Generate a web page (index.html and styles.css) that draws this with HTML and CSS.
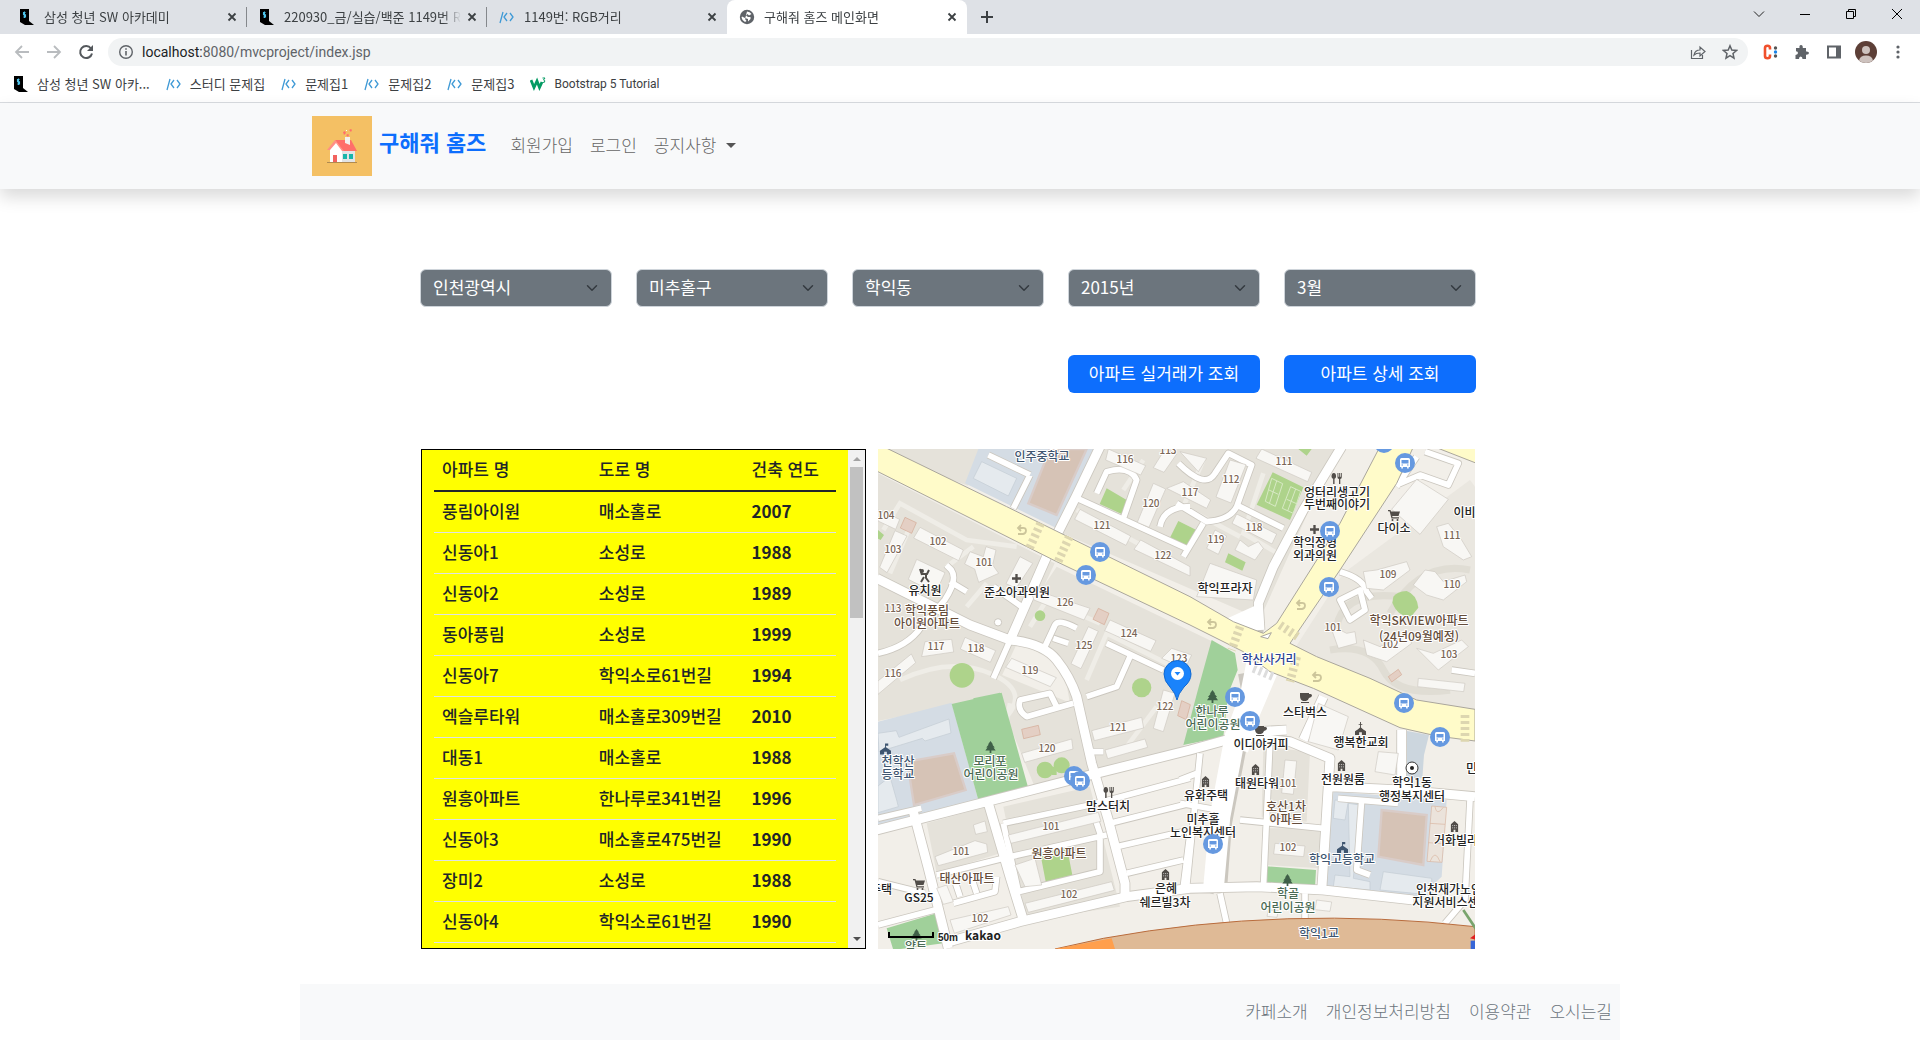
FILE: index.html
```html
<!DOCTYPE html>
<html lang="ko">
<head>
<meta charset="utf-8">
<title>구해줘 홈즈 메인화면</title>
<link rel="stylesheet" href="styles.css">
</head>
<body>
<svg class="defs" aria-hidden="true">
  <symbol id="ssafy" viewBox="0 0 16 16"><path d="M1 0h9v12l5 4H6l-5-3z" fill="#000"/><path d="M6.500 3.500h-2v2.200h2v2.300h-2.200M5.500 2.500v6.500" fill="none" stroke="#4fc3ea" stroke-width="1.100"/></symbol>
  <symbol id="code" viewBox="0 0 16 16"><path d="M4 3L1 14M8 4L5 8l3 4M11 4l3 4-3 4" fill="none" stroke="#3f9ad6" stroke-width="1.300"/></symbol>
  <symbol id="close" viewBox="0 0 16 16"><path d="M4.500 4.500l7 7M11.500 4.500l-7 7" stroke="#3c4043" stroke-width="1.800"/></symbol>
  <symbol id="bus" viewBox="0 0 20 20"><circle cx="10" cy="10" r="10" fill="#6699e0"/><path d="M6.500 5h7q1.500 0 1.500 1.500V14h-1.300v1.500h-1.600V14H7.900v1.500H6.300V14H5V6.500Q5 5 6.500 5z" fill="#fff"/><path d="M6.500 7h7v3.500h-7z" fill="#6699e0"/><path d="M6.500 12h1.500M12 12h1.500" stroke="#6699e0"/></symbol>
  <symbol id="tree" viewBox="0 0 12 14"><path d="M6 0l3 4H8l3 3.500H9.500L12 11H7v3H5v-3H0l2.500-3.500H1L4 4H3z" fill="#3f6048"/></symbol>
  <symbol id="tower" viewBox="0 0 10 12"><path d="M5 0l4 3.500V12H6V9.500H4V12H1V3.500z" fill="#514d49"/><path d="M2.500 5h5M2.500 7.500h5" stroke="#fff" stroke-width=".8" stroke-dasharray="1 1"/></symbol>
  <symbol id="school" viewBox="0 0 12 12"><path d="M6 0h3v2.500H6.500V4L12 8v4H7.500V9h-3v3H0V8l5.500-4V0z" fill="#3e5570"/></symbol>
  <symbol id="church" viewBox="0 0 12 14"><path d="M5.500 0h1v2H8v1H6.500v3L9 8l3 2v4H7.500v-3h-3v3H0v-4l3-2 2.500-2V3H4V2h1.500z" fill="#514d49"/></symbol>
  <symbol id="fork" viewBox="0 0 12 12"><path d="M2.500 0C4.500 0 5 2 5 3.500S4 6 3.300 6.300V12H1.800V6.300C1 6 0 5 0 3.500S.8 0 2.500 0zM6.500 0h1v4h.9V0h1v4h.8V0h1v4.500q0 1.500-1.600 2V12H8.200V6.500q-1.700-.5-1.700-2z" fill="#514d49"/></symbol>
  <symbol id="cart" viewBox="0 0 12 11"><path d="M0 0h2.500l.5 1.500h9L10.500 6H4.200l.3 1.200H11v1.200H3.500L1.600 1.200H0z" fill="#514d49"/><circle cx="4.500" cy="10" r="1" fill="#514d49"/><circle cx="9.500" cy="10" r="1" fill="#514d49"/></symbol>
  <symbol id="cup" viewBox="0 0 12 10"><path d="M0 0h9v1h1.500Q12 1 12 2.500T9 5Q8 8 6 8H3Q0 7 0 3zM1 9h8v1H1z" fill="#514d49"/></symbol>
  <symbol id="cross" viewBox="0 0 10 10"><path d="M3.700 0h2.600v3.700H10v2.600H6.300V10H3.700V6.300H0V3.700h3.700z" fill="#514d49"/></symbol>
  <symbol id="uturn" viewBox="0 0 12 12"><path d="M2 10h5q3-.5 3-3.500T6 4H2M5 1L2 4l3 3" fill="none" stroke="#ccc59a" stroke-width="1.800"/></symbol>
</svg>

<div class="browser">
  <div class="tabs">
    <div class="tab"><svg class="ico"><use href="#ssafy"/></svg><span class="tab-title">삼성 청년 SW 아카데미</span><button class="tab-close" aria-label="탭 닫기"><svg class="ico"><use href="#close"/></svg></button></div>
    <div class="tab"><svg class="ico"><use href="#ssafy"/></svg><span class="tab-title">220930_금/실습/백준 1149번 RGB거리</span><button class="tab-close" aria-label="탭 닫기"><svg class="ico"><use href="#close"/></svg></button></div>
    <div class="tab tab-plain"><svg class="ico"><use href="#code"/></svg><span class="tab-title">1149번: RGB거리</span><button class="tab-close" aria-label="탭 닫기"><svg class="ico"><use href="#close"/></svg></button></div>
    <div class="tab tab-active"><svg class="ico" viewBox="0 0 16 16"><circle cx="8" cy="8" r="7.200" fill="#5f6368"/><path d="M8 2.500q3 0 4.500 2.500L10 6.500 8.500 5 7 6.500 9 8h2.500v2L9 12.500V10L6 9 3 7.500l-.5 1q.5 3 3.500 4.500l1.500-1L6 10z" fill="#fff"/></svg><span class="tab-title">구해줘 홈즈 메인화면</span><button class="tab-close" aria-label="탭 닫기"><svg class="ico"><use href="#close"/></svg></button></div>
    <button class="new-tab" aria-label="새 탭"><svg class="ico" viewBox="0 0 16 16"><path d="M8 2v12M2 8h12" stroke="#3c4043" stroke-width="2"/></svg></button>
    <div class="win-buttons">
      <button aria-label="탭 검색"><svg class="ico" viewBox="0 0 16 16"><path d="M3 5.500l5 5 5-5" fill="none" stroke="#222"/></svg></button>
      <button aria-label="최소화"><svg class="ico" viewBox="0 0 16 16"><path d="M3 8.500h10" stroke="#000"/></svg></button>
      <button aria-label="이전 크기로"><svg class="ico" viewBox="0 0 16 16"><path d="M3.500 5.500h7v7h-7zM5.500 5.500v-2h7v7h-2" fill="none" stroke="#000"/></svg></button>
      <button aria-label="닫기"><svg class="ico" viewBox="0 0 16 16"><path d="M3 3l10 10M13 3L3 13" stroke="#000"/></svg></button>
    </div>
  </div>
  <div class="toolbar">
    <button aria-label="뒤로"><svg class="ico" viewBox="0 0 16 16"><path d="M15 8H2M8 2L2 8l6 6" fill="none" stroke="#b9bcbf" stroke-width="1.800"/></svg></button>
    <button aria-label="앞으로"><svg class="ico" viewBox="0 0 16 16"><path d="M1 8h13M8 2l6 6-6 6" fill="none" stroke="#b9bcbf" stroke-width="1.800"/></svg></button>
    <button aria-label="새로고침"><svg class="ico" viewBox="0 0 16 16"><path d="M13 4.500A6 6 0 1 0 14 9.500" fill="none" stroke="#54585c" stroke-width="2"/><path d="M15 1v6H9z" fill="#54585c"/></svg></button>
    <div class="omnibox">
      <svg class="ico" viewBox="0 0 16 16"><circle cx="8" cy="8" r="6.300" fill="none" stroke="#5f6368" stroke-width="1.400"/><path d="M8 7v4.500M8 4.300v1.500" stroke="#5f6368" stroke-width="1.600"/></svg>
      <p class="url"><span class="host">localhost:</span>8080/mvcproject/index.jsp</p>
      <button aria-label="공유"><svg class="ico" viewBox="0 0 16 16"><path d="M1.500 6v8.500h11V11M4 11q1-5 6-5V3l5 4.500L10 12V9q-4 0-6 2z" fill="none" stroke="#5f6368" stroke-width="1.200"/></svg></button>
      <button aria-label="북마크"><svg class="ico" viewBox="0 0 16 16"><path d="M8 1.800l1.800 4.300 4.700.4-3.500 3 1 4.600L8 11.700l-4 2.400 1-4.600-3.500-3 4.700-.4z" fill="none" stroke="#5f6368" stroke-width="1.500"/></svg></button>
    </div>
    <div class="extensions">
      <button aria-label="확장 프로그램 C"><svg class="ico" viewBox="0 0 16 16"><path d="M8 5.500V4Q8 1.800 5.500 1.800T3 4v8q0 2.200 2.500 2.200T8 12v-1.500" fill="none" stroke="#f0502c" stroke-width="2.600"/><circle cx="13.500" cy="4" r="1.700" fill="#555"/><circle cx="13.500" cy="8" r="1.700" fill="#1a84e8"/><circle cx="13.500" cy="12" r="1.700" fill="#555"/></svg></button>
      <button aria-label="확장 프로그램"><svg class="ico" viewBox="0 0 16 16"><path d="M2 4h3.500q-.5-3 1.500-3t1.800 3H12v3.500q3-.3 3 1.500t-3 1.700V15H8.500q0-2.500-1.800-2.500T5 15H1.500v-4Q4 10.500 4 9T2 7.300z" fill="#5f6368"/></svg></button>
      <button aria-label="측면 패널"><svg class="ico" viewBox="0 0 16 16"><path d="M2 2.500h12v11H2z" fill="#fff" stroke="#5f6368" stroke-width="2"/><path d="M10 2h4v12h-4z" fill="#5f6368"/></svg></button>
      <button class="profile" aria-label="프로필"><svg class="avatar" viewBox="0 0 22 22"><circle cx="11" cy="11" r="11" fill="#5d3f37"/><circle cx="11" cy="9" r="4" fill="#cdc2be"/><path d="M4 19.500q1-5 7-5t7 5q-3 2.500-7 2.500t-7-2.500z" fill="#cdc2be"/></svg></button>
      <button aria-label="메뉴"><svg class="ico" viewBox="0 0 16 16"><circle cx="8" cy="3" r="1.600" fill="#5f6368"/><circle cx="8" cy="8" r="1.600" fill="#5f6368"/><circle cx="8" cy="13" r="1.600" fill="#5f6368"/></svg></button>
    </div>
  </div>
  <nav class="bookmarks" aria-label="북마크바">
    <a href="#"><svg class="ico"><use href="#ssafy"/></svg>삼성 청년 SW 아카...</a>
    <a href="#"><svg class="ico"><use href="#code"/></svg>스터디 문제집</a>
    <a href="#"><svg class="ico"><use href="#code"/></svg>문제집1</a>
    <a href="#"><svg class="ico"><use href="#code"/></svg>문제집2</a>
    <a href="#"><svg class="ico"><use href="#code"/></svg>문제집3</a>
    <a href="#" class="latin"><svg class="ico" viewBox="0 0 16 16"><path d="M1 4l3 7.500L7 5l2.500 6.500L12 6" fill="none" stroke="#049b63" stroke-width="2.800"/><path d="M12.500 2h2.500l-1.500 2q2 .3 1 2.200l-2 .3" fill="none" stroke="#049b63"/></svg>Bootstrap 5 Tutorial</a>
  </nav>
</div>

<header class="site-header">
  <div class="header-inner">
    <a href="#" class="brand">
      <svg class="logo" viewBox="0 0 60 60" aria-hidden="true"><path d="M0 0h60v60H0z" fill="#f4c064"/><path d="M15 46h30v1H15z" fill="#b08a50"/><path d="M18 33l6-8 7 8v13H18z" fill="#fff"/><path d="M30 33h13v13H30z" fill="#e2e4e6"/><path d="M23 24h16l6 11H31z" fill="#ff6f6a"/><path d="M23 24l-8 10h3l6-7 6 8h2z" fill="#ff8f85"/><path d="M33 21h5v8l-5-2z" fill="#f4f1ee"/><path d="M21 39h4v7h-4z" fill="#f2635f"/><path d="M31 38h4v5h-4zM37 38h4v5h-4z" fill="#19b5aa"/><path d="M31 16l2-1 1 2-2 2zM34 19l2-1 1 1-1 2zM37 14l2-1 1 1-1 2z" fill="#ff6f6a"/><path d="M34 14h1v1h-1z" fill="#fff"/></svg>
      <span class="brand-name">구해줘 홈즈</span>
    </a>
    <nav class="menu">
      <a href="#">회원가입</a>
      <a href="#">로그인</a>
      <a href="#" class="drop">공지사항</a>
    </nav>
  </div>
</header>

<main class="content">
  <form class="filters">
    <select aria-label="시도"><option>인천광역시</option></select>
    <select aria-label="구군"><option>미추홀구</option></select>
    <select aria-label="동"><option>학익동</option></select>
    <select aria-label="연도"><option>2015년</option></select>
    <select aria-label="월"><option>3월</option></select>
  </form>
  <div class="actions">
    <button type="button" class="deal">아파트 실거래가 조회</button>
    <button type="button">아파트 상세 조회</button>
  </div>
  <div class="results">
    <div class="list">
      <div class="list-body">
        <table>
          <thead><tr><th>아파트 명</th><th>도로 명</th><th>건축 연도</th></tr></thead>
          <tbody>
            <tr><td>풍림아이원</td><td>매소홀로</td><td>2007</td></tr>
            <tr><td>신동아1</td><td>소성로</td><td>1988</td></tr>
            <tr><td>신동아2</td><td>소성로</td><td>1989</td></tr>
            <tr><td>동아풍림</td><td>소성로</td><td>1999</td></tr>
            <tr><td>신동아7</td><td>학익소로61번길</td><td>1994</td></tr>
            <tr><td>엑슬루타워</td><td>매소홀로309번길</td><td>2010</td></tr>
            <tr><td>대동1</td><td>매소홀로</td><td>1988</td></tr>
            <tr><td>원흥아파트</td><td>한나루로341번길</td><td>1996</td></tr>
            <tr><td>신동아3</td><td>매소홀로475번길</td><td>1990</td></tr>
            <tr><td>장미2</td><td>소성로</td><td>1988</td></tr>
            <tr><td>신동아4</td><td>학익소로61번길</td><td>1990</td></tr>
          </tbody>
        </table>
      </div>
      <div class="scroll" aria-hidden="true"><i class="up"></i><i class="thumb"></i><i class="down"></i></div>
    </div>
    <svg class="map" viewBox="8 9 597 500" preserveAspectRatio="xMidYMid slice" role="img" aria-label="학익동 지도">
      <rect x="0" y="0" width="620" height="520" fill="#f2efe9"/>
      <g transform="scale(.33333)">
        <!-- apartment blocks -->
        <g fill="#e5e2da">
          <path d="M24 27h330l-60 110-270-100zM24 100l530 270-160 340-370-90zM24 620l360 80 220 90 40 230-150 20-110-270-370 75zM560 380l500 240-120 300-300 90-60-330-160-90zM700 27h700l-230 510-600-260z"/>
          <path d="M170 1150l180-50 40 140-190 60zM400 1100l260-60 90 360-280 40zM1180 920l140 15-10 210-135-15zM1190 1165h160v120l-160-10z"/>
        </g>
        <path d="M1420 400l380-280 15 20v720l-220-40-330-180z" fill="#eae7e0"/>
        <path d="M1560 520q90-160 240-130M1400 560q20-110 190-90M1380 630q120-20 160 60t200 60" fill="none" stroke="#e0ddd4" stroke-width="22"/>
        <g fill="none" stroke="#efede7" stroke-width="14">
          <path d="M40 270l50-80 200 110 150 20M60 400l60-140M230 380l80-60M290 500l60-70M90 720q150-70 270-20t50 130M480 560l50-80 160 70M650 720l60-140 200 100M620 210l330 180M820 60l-60 90M1000 60l-60 140 170 90M1180 100l-60 180 120 70M420 790l-20 100M860 800l-90 120"/>
        </g>
        <!-- schools -->
        <g fill="#d4dce4">
          <path d="M325 27h370L560 265 285 130zM24 845l221-57 80 292-301 85zM1390 1055l340 25-15 230-65 60-285-20z"/>
        </g>
        <path d="M1595 870l82 15-15 60-5 70h-62z" fill="#ccd6de"/>
        <g fill="#e5eaee" stroke="#c3ccd3" stroke-width="2">
          <path d="M335 65l105 50-25 53-105-53zM24 880l55-8 8 20 150-55 6 42-78 24-8-8-130 40zM60 1010l20 70 5 20-61 18v-80zM1395 1080l40 5-10 55-35-5zM1435 1090l35 5-20 220 50 10v25l-110-10 5-35 45 5zM1540 1295l145 20v50l-155-15z"/>
        </g>
        <g fill="#d6c3b6" stroke="#d9ccc8" stroke-width="7">
          <path d="M540 27h110l-90 198-85-35zM112 965l140-25 35 110-155 45zM1535 1110l135 15-10 150-135-25z"/>
          <path d="M1685 1098l45 4-14 165-45-3z" fill="#ebe3db" stroke="#d9b5a0" stroke-width="2"/>
        </g>
        <path d="M1680 1150l45 3M1675 1208l45 3M1695 1100q5 30 25 2M1680 1265q15-40 30 0" fill="none" stroke="#d9b5a0" stroke-width="2"/>
        <!-- parks and grass -->
        <g fill="#a0d09a">
          <path d="M245 792l150-34 80 287-150 35zM1025 600l70 40 8 50-28 70-15 130-120 25 45-170zM1180 1278l158 12-3 55-155 5zM50 1465l150-45 20 90-150 20zM310 775l80-17 10 30-90 5z"/>
        </g>
        <g fill="#aed38b">
          <path d="M710 145l60 35-15 42-66-30zM925 243l60 30-20 55-65-35zM24 270l18 15-10 15-8-4zM1208 97l92 45-40 98-100-46zM1285 27h40l-15 20zM1075 340l52 27-10 25-52-25zM510 1235l80-17 18 92-80 20z"/>
          <circle cx="276" cy="706" r="37"/><circle cx="815" cy="743" r="29"/><circle cx="510" cy="527" r="16"/><circle cx="525" cy="990" r="25"/><circle cx="575" cy="976" r="24"/><path d="M545 980h15v25h-15z"/>
          <path d="M1570 470q10-15 40-17 30 10 35 50l-20 25q-40 5-58-40z"/>
        </g>
        <path d="M1205 115l33 16-22 68-30-15zM1262 140l30 14-22 66-33-15zM1220 123l-22 68M1197 150l28 13M1277 147l-24 66M1250 178l32 14" fill="none" stroke="#d7e9c4" stroke-width="3"/>
        <!-- road casing -->
        <g fill="none" stroke="#cbc7bf" stroke-width="32" stroke-linejoin="round">
          <path d="M690 20L618 170 560 285M530 350L425 590M20 415l150 75 130 65 120 45q100 10 140 60t60 110l45 200 50 170 50 190v50"/>
          <path d="M1415 20l-115 190-90 170-45 110 5 80M20 1170l310-80 330-85 300-75 200-55 90-5M130 1115l45 170 60 240M355 1090l65 220 40 130M220 1510l230-65 320-75 190-25 200-5 200 10 270 30M1120 700l15 80-25 120-55 240-40 220M1200 690l-80 200-50 260-15 200M1110 890l150 15 120 50-5 80-20 320M1385 1040l210 10 220 20M1595 870v180M1360 770l-60 130"/>
        </g>
        <g fill="none" stroke="#cbc7bf" stroke-width="22" stroke-linejoin="round">
          <path d="M24 640q90-20 130-80l70-80q40-60 20-90l-15-15M240 425l50 30M610 170l110 50 240 110M680 160l30-65q70-20 90 25l-40 115M870 260q10-60 90-60M925 70q80 80 110 30l40-60 70 35-45 125q-20 40-90 45L920 190M1000 250l-60 100M1100 195l140 70M370 440l85 60M425 590l-55 125M520 630l35-75q10-20 65 10M550 595l45 15M710 610l170 80M780 650l-40 90-90 30M610 790l-140 40q-30-20-20-50l90-20 20 40M655 935h45"/>
          <path d="M720 1150l240-60M400 1150l260-55 300-80M740 1220l220-50M770 1300l170-40M400 1150l45 205 245-60V1180l-20-60M200 1305l200-50 310-70M24 1455l170-45M250 1390l125-35 5-45M24 1135l130-30M960 1180l-20 160M990 940l-40 400M1200 900l-20 450M930 1090l115 20M1110 1140l250 25M1800 1080l-15 300-60 70M1050 1360l20 90M1305 1360v80M1404 1075l180 15M1475 1080l-15 210 40 15M930 1020l50-20M1410 395q70 20 80 60l15 20M1410 480l60-30 15 60-45 30zM1665 35l100 35-30 65-85-30-70 30M1640 50l-60 90M1745 690l70 10M480 105l-50 100M355 45l125 60M250 1310l20 60M300 1300l20 60M24 1325l140 35M1180 580l-110-10-20-20"/>
        </g>
        <!-- road surface -->
        <g fill="none" stroke="#fff" stroke-width="27" stroke-linejoin="round">
          <path d="M690 20L618 170 560 285M530 350L425 590M20 415l150 75 130 65 120 45q100 10 140 60t60 110l45 200 50 170 50 190v50"/>
          <path d="M1415 20l-115 190-90 170-45 110 5 80M20 1170l310-80 330-85 300-75 200-55 90-5M130 1115l45 170 60 240M355 1090l65 220 40 130M220 1510l230-65 320-75 190-25 200-5 200 10 270 30M1110 890l150 15 120 50-5 80-20 320M1385 1040l210 10 220 20M1595 870v180M1360 770l-60 130"/>
          <path d="M1160 670l-20 100-45 120-45 240-20 220" stroke-width="62"/>
          <path d="M1200 690l-55 130-35 110" stroke-width="50"/>
        </g>
        <g fill="none" stroke="#fff" stroke-width="17" stroke-linejoin="round">
          <path d="M24 640q90-20 130-80l70-80q40-60 20-90l-15-15M240 425l50 30M610 170l110 50 240 110M680 160l30-65q70-20 90 25l-40 115M870 260q10-60 90-60M925 70q80 80 110 30l40-60 70 35-45 125q-20 40-90 45L920 190M1000 250l-60 100M1100 195l140 70M370 440l85 60M425 590l-55 125M520 630l35-75q10-20 65 10M550 595l45 15M710 610l170 80M780 650l-40 90-90 30M610 790l-140 40q-30-20-20-50l90-20 20 40M655 935h45"/>
          <path d="M720 1150l240-60M400 1150l260-55 300-80M740 1220l220-50M770 1300l170-40M400 1150l45 205 245-60V1180l-20-60M200 1305l200-50 310-70M24 1455l170-45M250 1390l125-35 5-45M24 1135l130-30M960 1180l-20 160M990 940l-40 400M1200 900l-20 450M930 1090l115 20M1110 1140l250 25M1800 1080l-15 300-60 70M1050 1360l20 90M1305 1360v80M1404 1075l180 15M1475 1080l-15 210 40 15M930 1020l50-20M1410 395q70 20 80 60l15 20M1410 480l60-30 15 60-45 30zM1665 35l100 35-30 65-85-30-70 30M1640 50l-60 90M1745 690l70 10M480 105l-50 100M355 45l125 60M250 1310l20 60M300 1300l20 60M24 1325l140 35"/>
        </g>
        <path d="M1050 545l110-50 15 70-40 20z" fill="#fff"/>
        <!-- main yellow roads -->
        <path d="M20 10l390 190 550 270 130 75 90 35 40-30 190-300 125-240h100l-55 120-170 260-150 220 80 40 160 65 140 65 175 28v95l-115-15-110-25-260-118-130-50-80-60-160-80-400-190L20 93z" fill="#fffbc9" stroke="#aaa69c" stroke-width="3"/>
        <path d="M1692 20l128 50V10z" fill="#fffbc9" stroke="#aaa69c" stroke-width="3"/>
        <g fill="none" stroke="#ddd6b0" stroke-width="26" stroke-dasharray="9 9">
          <path d="M512 250l-36 80M598 290l-36 80M1110 560l-25 70M1280 650l-20 75M1230 555l60 40M1785 825v80"/>
          <path d="M1150 685l60 25" stroke="#ddd"/>
        </g>
        <path d="M1172 590l32-12-10 18z" fill="#fff" stroke="#aaa69c" stroke-width="3"/>
        <!-- bridge -->
        <path d="M555 1527l145-32q550-100 1115-35v80H555z" fill="#dfba96" stroke="#b96b3c" stroke-width="3"/>
        <path d="M555 1527l170-32 10 32z" fill="#ff9f4d"/>
        <path d="M1780 1410l40 60" stroke="#79a46d" stroke-width="8"/>
        <path d="M1800 1495l20-15v20z" fill="#e02020"/><path d="M1802 1502h20v30h-20z" fill="#3766d8"/>
        <!-- buildings -->
        <g fill="#f8f7f4" stroke="#cdc9c1" stroke-width="2">
          <path d="M24 210l65 28-12 30-53-25zM150 262l130 68-14 32-135-68zM75 272l36 16-60 110-22-16zM140 358l85 40-28 62-82-42zM300 335l40 15 8-30 30 10-10 45 18 25-60 27-12-40-30-15zM450 350l38 20-50 75-30-14zM480 445l180 60-18 35-150-60zM655 560l30 14-52 112-30-15zM720 540l138 62-16 32-138-62zM165 605l80-7 6 38-96 14zM285 592l92 40-16 35-90-40zM425 655l134 58-18 27-134-58zM124 642l13 26-113 95v-40zM715 27l112 50-15 28-105-45zM885 27l35 15-38 55-32-14zM850 130l37 17-50 115-35-15zM630 208l152 80-14 28-154-78zM812 300l148 80v28l-168-80zM905 625l60 20-20 40-70-30z"/>
          <path d="M930 35l80 20-25 40zM1175 27l150 70-12 28-155-70zM1080 60l48 14-45 115-45-18zM940 125l82 55-12 25-120-60zM1100 222l120 60-14 30-120-62zM1035 270l35 18-25 55-35-18zM1110 300l25 20 30-15 15 20-25 35-60-30zM1020 370l140 50-10 60-170-10zM1640 118l95 60-85 105-85-75zM1735 250l40 50 30 50-25 10-60-40-20-60zM1480 395l40-5 90-25 10 25-80 60-50-5zM1665 390l30 5 25 30 65-20 5 20-70 55-50-15-40-30zM1380 555l50 25 25-5 5 35-55 15zM1480 600l50 20 35-15 50-20 10 25-75 55-60-20zM1640 625l50 15 85-40 20 20-90 70zM1645 715l140 15-4 25-138-15zM880 750l35 10-35 115-30-10z"/>
          <path d="M665 872l150-40 6 32-148 38zM705 930l120-33 8 25-120 34zM455 940l150-43 4 30-145 40zM415 1185l270-68 8 27-270 66zM195 1250l45-18 75-30 35 10 3 25-148 40zM310 1155l35-12 7 32-35 8zM435 1275l60-20 20 80-50 5zM465 1390l260-65 8 26-258 66zM240 1440l175-40 8 25-170 55zM200 1345l30-10 20 50-30 8z"/>
          <path d="M1245 960l35 3-10 100-35-4zM1215 1210l90 8-4 32-90-8zM1345 790l90 40-30 100-90-25zM1525 935l60 5-10 65-60-10zM1195 1410l30 2-4 20-30-3zM1340 1380l45 6-5 28-45-5z"/>
        </g>
        <g fill="#e4cfc4" stroke="#d3a994" stroke-width="2"><path d="M105 232l34 16-14 32-34-16zM685 505l32 15-14 34-34-16zM455 868l50-12 6 28-50 12zM935 782l26 12-12 45-26-12zM1555 710l30-22 10 16-30 22z"/></g>
        <circle cx="384" cy="547" r="11" fill="#fff" stroke="#cbc7bf" stroke-width="3"/>
      </g>

      <g class="turns"><use href="#uturn" x="145" y="84" width="14" height="12"/><use href="#uturn" x="335" y="178" width="14" height="12"/><use href="#uturn" x="425" y="159" width="12" height="12"/><use href="#uturn" x="440" y="231" width="14" height="12"/></g>

      <g class="pictos">
        <circle cx="52" cy="131" r="2" fill="#514d49"/><path d="M51 134h6l2-4M56 134v4l3 4M54 137l-3 5M50 129l2 6" fill="none" stroke="#514d49" stroke-width="2"/>
        <use href="#cross" x="142" y="134" width="9" height="9"/><use href="#cross" x="440" y="85" width="9" height="9"/>
        <use href="#fork" x="461" y="33" width="12" height="11"/><use href="#fork" x="233" y="347" width="12" height="11"/>
        <use href="#cart" x="518" y="70" width="12" height="11"/><use href="#cart" x="43" y="439" width="12" height="11"/>
        <use href="#tree" x="115" y="301" width="11" height="12"/><use href="#tree" x="337" y="250" width="11" height="13"/><use href="#tree" x="412" y="434" width="11" height="12"/><use href="#tree" x="41" y="489" width="11" height="12"/>
        <use href="#school" x="10" y="303" width="11" height="12"/><use href="#school" x="467" y="402" width="11" height="11"/>
        <use href="#church" x="485" y="282" width="11" height="13"/>
        <use href="#cup" x="430" y="253" width="12" height="10"/><use href="#cup" x="385" y="286" width="12" height="10"/>
        <use href="#tower" x="331" y="336" width="9" height="11"/><use href="#tower" x="381" y="324" width="9" height="11"/><use href="#tower" x="467" y="320" width="9" height="11"/><use href="#tower" x="580" y="381" width="9" height="11"/><use href="#tower" x="291" y="429" width="9" height="11"/>
        <circle cx="542" cy="328" r="6" fill="#fff" stroke="#333"/><circle cx="542" cy="328" r="2" fill="#222"/>
      </g>

      <g class="num">
        <text x="16" y="79">104</text><text x="23" y="113">103</text><text x="68" y="105">102</text><text x="114" y="126">101</text><text x="23" y="172">113</text><text x="66" y="210">117</text><text x="106" y="212">118</text><text x="23" y="237">116</text><text x="160" y="234">119</text><text x="195" y="166">126</text><text x="214" y="209">125</text><text x="259" y="197">124</text><text x="309" y="222">123</text><text x="255" y="23">116</text><text x="298" y="14">113</text><text x="281" y="67">120</text><text x="232" y="89">121</text><text x="293" y="119">122</text>
        <text x="414" y="25">111</text><text x="361" y="43">112</text><text x="320" y="56">117</text><text x="384" y="91">118</text><text x="346" y="103">119</text><text x="582" y="99">111</text><text x="518" y="138">109</text><text x="582" y="148">110</text><text x="463" y="191">101</text><text x="520" y="208">102</text><text x="579" y="218">103</text>
        <text x="295" y="270">122</text><text x="248" y="291">121</text><text x="177" y="312">120</text><text x="181" y="390">101</text><text x="91" y="415">101</text><text x="110" y="482">102</text><text x="199" y="458">102</text><text x="418" y="347">101</text><text x="418" y="411">102</text>
      </g>
      <g class="blue"><text x="172" y="21">인주중학교</text><text x="28" y="326">천학산</text><text x="28" y="339">등학교</text><text x="472" y="424">학익고등학교</text><text x="449" y="498">학익1교</text></g>
      <g class="navy"><text x="399" y="224">학산사거리</text></g>
      <g class="brown"><text x="57" y="175">학익풍림</text><text x="57" y="188">아이원아파트</text><text x="549" y="185">학익SKVIEW아파트</text><text x="549" y="201">(24년09월예정)</text><text x="189" y="418">원흥아파트</text><text x="97" y="443">태산아파트</text><text x="416" y="371">호산1차</text><text x="416" y="384">아파트</text></g>
      <g class="green"><text x="120" y="326">모리포</text><text x="121" y="339">어린이공원</text><text x="342" y="276">한나루</text><text x="343" y="289">어린이공원</text><text x="418" y="458">학골</text><text x="418" y="472">어린이공원</text><text x="46" y="511">약트</text></g>
      <g class="poi">
        <text x="55" y="155">유치원</text><text x="147" y="157">준소아과의원</text><text x="467" y="57">엉터리생고기</text><text x="467" y="69">두번째이야기</text><text x="445" y="107">학익정형</text><text x="445" y="120">외과의원</text><text x="524" y="93">다이소</text><text x="600" y="77">이비인</text><text x="355" y="153">학익프라자</text>
        <text x="435" y="277">스타벅스</text><text x="391" y="309">이디야커피</text><text x="491" y="307">행복한교회</text><text x="387" y="348">태원타워</text><text x="473" y="344">전원원룸</text><text x="336" y="360">유화주택</text><text x="542" y="347">학익1동</text><text x="542" y="361">행정복지센터</text><text x="333" y="384">미추홀</text><text x="333" y="397">노인복지센터</text><text x="586" y="405">거화빌라</text><text x="579" y="454">인천재가노인</text><text x="581" y="467">지원서비스센터</text><text x="607" y="333">민들</text>
        <text x="238" y="371">맘스터치</text><text x="296" y="453">은혜</text><text x="295" y="467">쉐르빌3차</text><text x="49" y="462">GS25</text><text x="11" y="454">주택</text>
      </g>
      <g class="stops">
        <use href="#bus" x="220" y="102" width="20" height="20"/><use href="#bus" x="206" y="125" width="20" height="20"/><use href="#bus" x="504" y="-7" width="20" height="20"/><use href="#bus" x="525" y="13" width="20" height="20"/><use href="#bus" x="450" y="81" width="20" height="20"/><use href="#bus" x="449" y="137" width="20" height="20"/><use href="#bus" x="355" y="247" width="20" height="20"/><use href="#bus" x="370" y="271" width="20" height="20"/><use href="#bus" x="524" y="253" width="20" height="20"/><use href="#bus" x="560" y="287" width="20" height="20"/><use href="#bus" x="194" y="326" width="20" height="20"/><use href="#bus" x="200" y="331" width="20" height="20"/><use href="#bus" x="333" y="394" width="20" height="20"/>
      </g>
      <path d="M307 260q-1-6-7-13-6-6-6-13a13.500 13.500 0 0 1 27 0q0 7-7 13-6 7-7 13z" fill="#1a83fb" stroke="#0f68d2"/><circle cx="307.500" cy="233.500" r="6.500" fill="#fff"/><path d="M304.500 232h6l-3 3.500z" fill="#1a83fb"/>
      <path d="M19 492v5h44v-5" fill="none" stroke="#000" stroke-width="2"/>
      <text class="scale" x="68" y="501">50m</text><text class="kakao" x="95" y="500">kakao</text>
    </svg>
  </div>
</main>

<footer class="site-footer">
  <a href="#">카페소개</a>
  <a href="#">개인정보처리방침</a>
  <a href="#">이용약관</a>
  <a href="#">오시는길</a>
</footer>
</body>
</html>
```

FILE: styles.css
```css
* { box-sizing: border-box; }

body {
  margin: 0;
  min-height: 100vh;
  display: flex;
  flex-direction: column;
  background: #fff;
  color: #212529;
  font: 400 17px/24px "Noto Sans CJK KR", "Noto Sans", sans-serif;
}

a { color: inherit; text-decoration: none; }
button { padding: 0; border: 0; background: none; font: inherit; color: inherit; }
.defs { display: none; }
.ico { width: 16px; height: 16px; flex: none; display: block; }

/* browser frame */
.browser { font-size: 13px; line-height: 20px; color: #3c4043; border-bottom: 1px solid #d9dce0; }
.tabs { display: flex; align-items: center; height: 34px; padding-left: 7px; background: #dee1e6; }
.tab { display: flex; align-items: center; gap: 9px; width: 240px; height: 34px; padding: 0 7px 0 12px; background: linear-gradient(#85888c, #85888c) right 7px / 1px 20px no-repeat; }
.tab-plain { background: none; }
.tab-active { border-radius: 8px 8px 0 0; background: #fff; }
.tab-title { flex: 1; overflow: hidden; white-space: nowrap; -webkit-mask: linear-gradient(90deg, #000 90%, transparent); mask: linear-gradient(90deg, #000 90%, transparent); }
.tab-close { margin-left: -6px; }
.new-tab { margin-left: 12px; }
.win-buttons { display: flex; gap: 30px; margin-left: auto; padding: 0 15px 6px 0; }

.toolbar { display: flex; align-items: center; height: 36px; padding: 0 14px; gap: 16px; }
.omnibox { flex: 1; display: flex; align-items: center; gap: 16px; height: 28px; margin-left: -2px; padding: 0 10px; border-radius: 14px; background: #f1f3f4; }
.url { flex: 1; margin: 0 0 0 -8px; font-family: Roboto, sans-serif; font-size: 14px; color: #5f6368; }
.host { color: #202124; }
.extensions { display: flex; align-items: center; gap: 16px; margin-left: -2px; }
.profile { margin: 0 -3px; }
.avatar { display: block; width: 22px; height: 22px; }

.bookmarks { display: flex; align-items: center; gap: 16px; height: 32px; padding: 0 13px 4px; }
.bookmarks a { display: flex; align-items: center; gap: 8px; }
.bookmarks .latin { font-family: Roboto, sans-serif; font-size: 12px; }

/* site header */
.site-header { background: #f8f9fa; box-shadow: 0 8px 16px rgba(0, 0, 0, .15); }
.header-inner { display: flex; align-items: center; gap: 24px; max-width: 1320px; margin: 0 auto; padding: 13px 12px; }
.brand { display: flex; align-items: center; gap: 7px; color: #0d6efd; font-size: 22px; font-weight: 700; }
.brand-name { padding-bottom: 10px; }
.logo { width: 60px; height: 60px; }
.menu { display: flex; gap: 17px; padding-bottom: 2px; font-weight: 300; color: #666; }
.drop::after { content: ""; display: inline-block; margin-left: 10px; vertical-align: 4px; border: 5px solid transparent; border-top-color: #555; border-bottom: 0; }

/* search controls */
.content { width: 100%; max-width: 1104px; margin: 0 auto; padding: 80px 36px 35px 12px; }
.filters, .actions { display: grid; grid-template-columns: repeat(5, 1fr); gap: 24px; }
.filters select {
  appearance: none;
  height: 38px;
  padding: 0 12px 2px;
  border: 1px solid #ced4da;
  border-radius: 6px;
  color: #fff;
  font: inherit;
  background: #6c757d url("data:image/svg+xml,%3Csvg xmlns='http://www.w3.org/2000/svg' viewBox='0 0 16 16'%3E%3Cpath fill='none' stroke='%23343a40' stroke-linecap='round' stroke-linejoin='round' stroke-width='2' d='m2 5 6 6 6-6'/%3E%3C/svg%3E") right 12px center / 14px 12px no-repeat;
}
.actions { margin: 48px 0 56px; }
.actions button { height: 38px; padding-bottom: 2px; border-radius: 6px; background: #0d6efd; color: #fff; white-space: nowrap; }
.actions .deal { grid-column: 4; }

/* results */
.results { display: grid; grid-template-columns: 445fr 597fr; gap: 12px; padding: 0 1px; }
.list { display: flex; height: 500px; border: 1px solid #000; background: #ff0; }
.list-body { flex: 1; overflow: hidden; padding: 0 12px; }
table { width: 100%; border-collapse: collapse; font-weight: 500; }
th, td { height: 41px; padding: 7px 8px 9px; text-align: left; font-weight: 500; border-bottom: 1px solid #dee2e6; white-space: nowrap; }
th { border-bottom: 2px solid #212529; }
th:nth-child(1) { width: 39%; }
th:nth-child(2) { width: 38%; }
td:nth-child(3) { font-weight: 700; }
.scroll { display: flex; flex-direction: column; align-items: center; width: 17px; background: #f1f1f1; }
.up, .down { border: 4px solid transparent; }
.up { margin: 7px 0 6px; border-top: 0; border-bottom-color: #a3a3a3; }
.thumb { width: 13px; height: 151px; background: #c1c1c1; }
.down { margin: auto 0 7px; border-bottom: 0; border-top-color: #505050; }

/* map */
.map { display: block; width: 100%; height: 500px; }
.map text { font-size: 12px; font-weight: 500; text-anchor: middle; paint-order: stroke; stroke: #fff; stroke-width: 2px; stroke-linejoin: round; fill: #222; }
.map .num text { font-size: 10px; fill: #7b6656; }
.map .blue text { fill: #3e5570; }
.map .navy text { fill: #2b4290; }
.map .brown text { fill: #654d3b; }
.map .green text { fill: #4b6b55; }
.map .scale, .map .kakao { text-anchor: start; }
.map .scale { font: 700 10px "Liberation Sans", sans-serif; }
.map .kakao { font-weight: 700; }

/* footer */
.site-footer { flex: 1; display: flex; justify-content: flex-end; gap: 18px; width: 100%; max-width: 1320px; margin: 0 auto; padding: 15px 8px 17px; background: #f8f9fa; color: #6c757d; font-weight: 300; }
```
